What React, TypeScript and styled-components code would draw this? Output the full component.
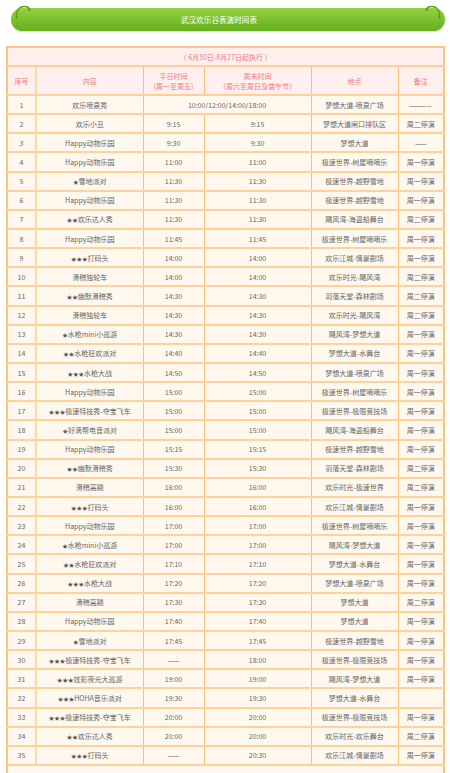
import React from "react";
import styled, { createGlobalStyle } from "styled-components";

const GlobalStyle = createGlobalStyle`
  html, body { margin: 0; padding: 0; background: #ffffff; }
  body { font-family: "Noto Sans CJK SC", "Liberation Sans", sans-serif; }
`;

const Page = styled.div`
  width: 450px;
  padding-top: 8px;
`;

const Banner = styled.div`
  position: relative;
  margin: 0 5px 0 11px;
  height: 23px;
  border-radius: 12px;
  background: linear-gradient(#92d23e, #72b928 70%, #69b021);
  box-shadow: 0 1px 1px rgba(80, 120, 30, 0.25);
  display: flex;
  align-items: center;
  justify-content: center;
  padding-right: 18px;
  box-sizing: border-box;
  color: #ffffff;
  font-size: 7.5px;
  letter-spacing: 0.1px;
`;

const Curl = styled.svg<{ $side: "left" | "right" }>`
  position: absolute;
  top: -4px;
  ${(p) => (p.$side === "left" ? "left: 2px;" : "right: 2px; transform: scaleX(-1);")}
  width: 20px;
  height: 16px;
  overflow: visible;
`;

const Table = styled.table`
  margin: 15px 0 0 6px;
  width: 437px;
  border-collapse: collapse;
  table-layout: fixed;
  border: 2px solid #fcc27e;
  border-bottom: none;
  background: #fff8ee;
  font-size: 7px;
  color: #666666;
`;

const CaptionCell = styled.td`
  height: 17px;
  background: #fff0ef;
  color: #ef7a82;
  text-align: center;
  font-size: 7px;
  border-bottom: 2px solid #ffcf98;
  padding: 0;
`;

const HeadCell = styled.th<{ $first?: boolean }>`
  height: 27px;
  background: #fff0ef;
  color: #ef7a82;
  font-weight: normal;
  text-align: center;
  line-height: 10px;
  padding: 0;
  border-bottom: 2px solid #ffcf98;
  border-right: ${(p) => (p.$first ? "2px solid #ffd7aa" : "1px solid #fbbf78")};
`;

const Row = styled.tr`
  height: 19.15px;
`;

const Cell = styled.td<{ $first?: boolean }>`
  padding: 0;
  text-align: center;
  white-space: nowrap;
  border-bottom: 2px solid #ffd29c;
  border-right: ${(p) => (p.$first ? "2px solid #ffd7aa" : "1px solid #fbbf78")};
`;

const Star = styled.span`
  font-size: 5.5px;
  color: #555555;
  vertical-align: 0.5px;
`;

const FillCell = styled.td`
  height: 14px;
  padding: 0;
`;

type R = [number, string, string, string | null, string, string];

const rows: R[] = [
  [1, "欢乐喷泉秀", "10:00/12:00/14:00/18:00", null, "梦想大道-喷泉广场", "————"],
  [2, "欢乐小丑", "9:15", "9:15", "梦想大道闸口排队区", "周二停演"],
  [3, "Happy动物乐园", "9:30", "9:30", "梦想大道", "——"],
  [4, "Happy动物乐园", "11:00", "11:00", "极速世界-树屋嘀嘀乐", "周一停演"],
  [5, "★雪地派对", "11:30", "11:30", "极速世界-越野雪地", "周一停演"],
  [6, "Happy动物乐园", "11:30", "11:30", "极速世界-越野雪地", "周一停演"],
  [7, "★★欢乐达人秀", "11:30", "11:30", "飓风湾-海盗船舞台", "周二停演"],
  [8, "Happy动物乐园", "11:45", "11:45", "极速世界-树屋嘀嘀乐", "周一停演"],
  [9, "★★★打码头", "14:00", "14:00", "欢乐江城-情景剧场", "周一停演"],
  [10, "滑稽独轮车", "14:00", "14:00", "欢乐时光-飓风湾", "周二停演"],
  [11, "★★幽默滑稽秀", "14:30", "14:30", "羽落天堂-森林剧场", "周二停演"],
  [12, "滑稽独轮车", "14:30", "14:30", "欢乐时光-飓风湾", "周二停演"],
  [13, "★水枪mini小巡游", "14:30", "14:30", "飓风湾-梦想大道", "周一停演"],
  [14, "★★水枪狂欢派对", "14:40", "14:40", "梦想大道-水舞台", "周一停演"],
  [15, "★★★水枪大战", "14:50", "14:50", "梦想大道-喷泉广场", "周一停演"],
  [16, "Happy动物乐园", "15:00", "15:00", "极速世界-树屋嘀嘀乐", "周一停演"],
  [17, "★★★极速特技秀-夺宝飞车", "15:00", "15:00", "极速世界-极限竞技场", "周一停演"],
  [18, "★好滴帮电音派对", "15:00", "15:00", "飓风湾-海盗船舞台", "周一停演"],
  [19, "Happy动物乐园", "15:15", "15:15", "极速世界-越野雪地", "周一停演"],
  [20, "★★幽默滑稽秀", "15:30", "15:30", "羽落天堂-森林剧场", "周二停演"],
  [21, "滑稽高跷", "16:00", "16:00", "欢乐时光-极速世界", "周二停演"],
  [22, "★★★打码头", "16:00", "16:00", "欢乐江城-情景剧场", "周一停演"],
  [23, "Happy动物乐园", "17:00", "17:00", "极速世界-树屋嘀嘀乐", "周一停演"],
  [24, "★水枪mini小巡游", "17:00", "17:00", "飓风湾-梦想大道", "周一停演"],
  [25, "★★水枪狂欢派对", "17:10", "17:10", "梦想大道-水舞台", "周一停演"],
  [26, "★★★水枪大战", "17:20", "17:20", "梦想大道-喷泉广场", "周一停演"],
  [27, "滑稽高跷", "17:30", "17:30", "梦想大道", "周二停演"],
  [28, "Happy动物乐园", "17:40", "17:40", "梦想大道", "周一停演"],
  [29, "★雪地派对", "17:45", "17:45", "极速世界-越野雪地", "周一停演"],
  [30, "★★★极速特技秀-夺宝飞车", "——", "18:00", "极速世界-极限竞技场", "周一停演"],
  [31, "★★★炫彩夜光大巡游", "19:00", "19:00", "飓风湾-梦想大道", "周一停演"],
  [32, "★★★HOHA音乐派对", "19:30", "19:30", "梦想大道-水舞台", ""],
  [33, "★★★极速特技秀-夺宝飞车", "20:00", "20:00", "极速世界-极限竞技场", "周一停演"],
  [34, "★★欢乐达人秀", "20:00", "20:00", "欢乐时光-欢乐舞台", "周二停演"],
  [35, "★★★打码头", "——", "20:30", "欢乐江城-情景剧场", "周一停演"],
];

function Name({ text }: { text: string }) {
  const m = text.match(/^(★*)(.*)$/);
  const stars = m ? m[1] : "";
  const rest = m ? m[2] : text;
  return (
    <>
      {stars && <Star>{stars}</Star>}
      {rest}
    </>
  );
}

function CurlIcon({ side }: { side: "left" | "right" }) {
  return (
    <Curl $side={side} viewBox="0 0 20 16">
      <path
        d="M3.5 13.5 C2.5 7, 6 2.5, 11 2.5 C14.5 2.5, 16.5 4, 16.5 6"
        fill="none"
        stroke="#5d9e1e"
        strokeWidth="1.3"
        strokeLinecap="round"
      />
      <path d="M14.6 5.2 L16.6 7.6 L18.2 4.9 Z" fill="#5d9e1e" />
      <circle cx="3.6" cy="13.6" r="0.9" fill="#4f8a18" />
    </Curl>
  );
}

export default function App() {
  return (
    <>
      <GlobalStyle />
      <Page>
        <Banner>
          <CurlIcon side="left" />
          <CurlIcon side="right" />
          武汉欢乐谷表演时间表
        </Banner>
        <Table>
          <colgroup>
            <col style={{ width: 29 }} />
            <col style={{ width: 107 }} />
            <col style={{ width: 61 }} />
            <col style={{ width: 107 }} />
            <col style={{ width: 87 }} />
            <col style={{ width: 46 }} />
          </colgroup>
          <tbody>
            <tr>
              <CaptionCell colSpan={6}>（ 6月30日-8月27日起执行 ）</CaptionCell>
            </tr>
            <tr>
              <HeadCell $first>序号</HeadCell>
              <HeadCell>内容</HeadCell>
              <HeadCell>
                平日时间
                <br />
                (周一至周五)
              </HeadCell>
              <HeadCell>
                周末时间
                <br />
                （周六至周日及端午节）
              </HeadCell>
              <HeadCell>地点</HeadCell>
              <HeadCell>备注</HeadCell>
            </tr>
            {rows.map(([n, name, wd, we, place, note]) => (
              <Row key={n}>
                <Cell $first>{n}</Cell>
                <Cell>
                  <Name text={name} />
                </Cell>
                {we === null ? (
                  <Cell colSpan={2}>{wd}</Cell>
                ) : (
                  <>
                    <Cell>{wd}</Cell>
                    <Cell>{we}</Cell>
                  </>
                )}
                <Cell>{place}</Cell>
                <Cell>{note}</Cell>
              </Row>
            ))}
            <tr>
              <FillCell colSpan={6} />
            </tr>
          </tbody>
        </Table>
      </Page>
    </>
  );
}
